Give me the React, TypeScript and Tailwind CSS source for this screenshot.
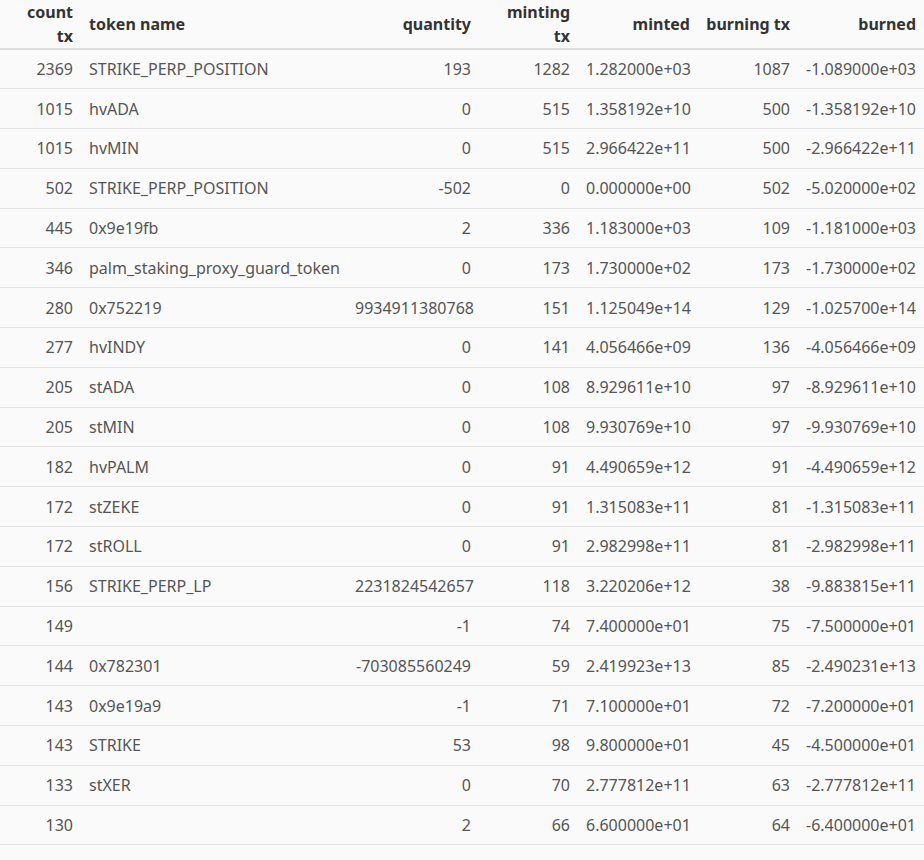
const rows: (string | number)[][] = [
  [2369, "STRIKE_PERP_POSITION", "193", 1282, "1.282000e+03", 1087, "-1.089000e+03"],
  [1015, "hvADA", "0", 515, "1.358192e+10", 500, "-1.358192e+10"],
  [1015, "hvMIN", "0", 515, "2.966422e+11", 500, "-2.966422e+11"],
  [502, "STRIKE_PERP_POSITION", "-502", 0, "0.000000e+00", 502, "-5.020000e+02"],
  [445, "0x9e19fb", "2", 336, "1.183000e+03", 109, "-1.181000e+03"],
  [346, "palm_staking_proxy_guard_token", "0", 173, "1.730000e+02", 173, "-1.730000e+02"],
  [280, "0x752219", "9934911380768", 151, "1.125049e+14", 129, "-1.025700e+14"],
  [277, "hvINDY", "0", 141, "4.056466e+09", 136, "-4.056466e+09"],
  [205, "stADA", "0", 108, "8.929611e+10", 97, "-8.929611e+10"],
  [205, "stMIN", "0", 108, "9.930769e+10", 97, "-9.930769e+10"],
  [182, "hvPALM", "0", 91, "4.490659e+12", 91, "-4.490659e+12"],
  [172, "stZEKE", "0", 91, "1.315083e+11", 81, "-1.315083e+11"],
  [172, "stROLL", "0", 91, "2.982998e+11", 81, "-2.982998e+11"],
  [156, "STRIKE_PERP_LP", "2231824542657", 118, "3.220206e+12", 38, "-9.883815e+11"],
  [149, "", "-1", 74, "7.400000e+01", 75, "-7.500000e+01"],
  [144, "0x782301", "-703085560249", 59, "2.419923e+13", 85, "-2.490231e+13"],
  [143, "0x9e19a9", "-1", 71, "7.100000e+01", 72, "-7.200000e+01"],
  [143, "STRIKE", "53", 98, "9.800000e+01", 45, "-4.500000e+01"],
  [133, "stXER", "0", 70, "2.777812e+11", 63, "-2.777812e+11"],
  [130, "", "2", 66, "6.600000e+01", 64, "-6.400000e+01"],
];

const headers = ["count tx", "token name", "quantity", "minting tx", "minted", "burning tx", "burned"];
const widths = ["w-[81px]", "w-[266px]", "w-[132px]", "w-[99px]", "w-[120px]", "w-[100px]", "w-[126px]"];

export default function App() {
  return (
    <div className="w-[924px] h-[860px] bg-[#fafafa] font-['Open_Sans',sans-serif] text-[16px]">
      <table className="w-[924px] table-fixed border-collapse">
        <thead>
          <tr className="h-[39px] border-b-2 border-[#dddddd]">
            {headers.map((h, i) => (
              <th
                key={h}
                className={`${widths[i]} px-2 font-bold text-[#333] ${i === 1 ? "text-left" : "text-right"}`}
              >
                {h}
              </th>
            ))}
          </tr>
        </thead>
        <tbody>
          {rows.map((r, ri) => (
            <tr key={ri} className="h-[39.8px] border-b border-[#e3e3e3] text-[#555]">
              {r.map((c, i) => (
                <td key={i} className={`px-2 whitespace-nowrap ${i === 1 ? "text-left" : "text-right"}`}>
                  {c}
                </td>
              ))}
            </tr>
          ))}
        </tbody>
      </table>
    </div>
  );
}
